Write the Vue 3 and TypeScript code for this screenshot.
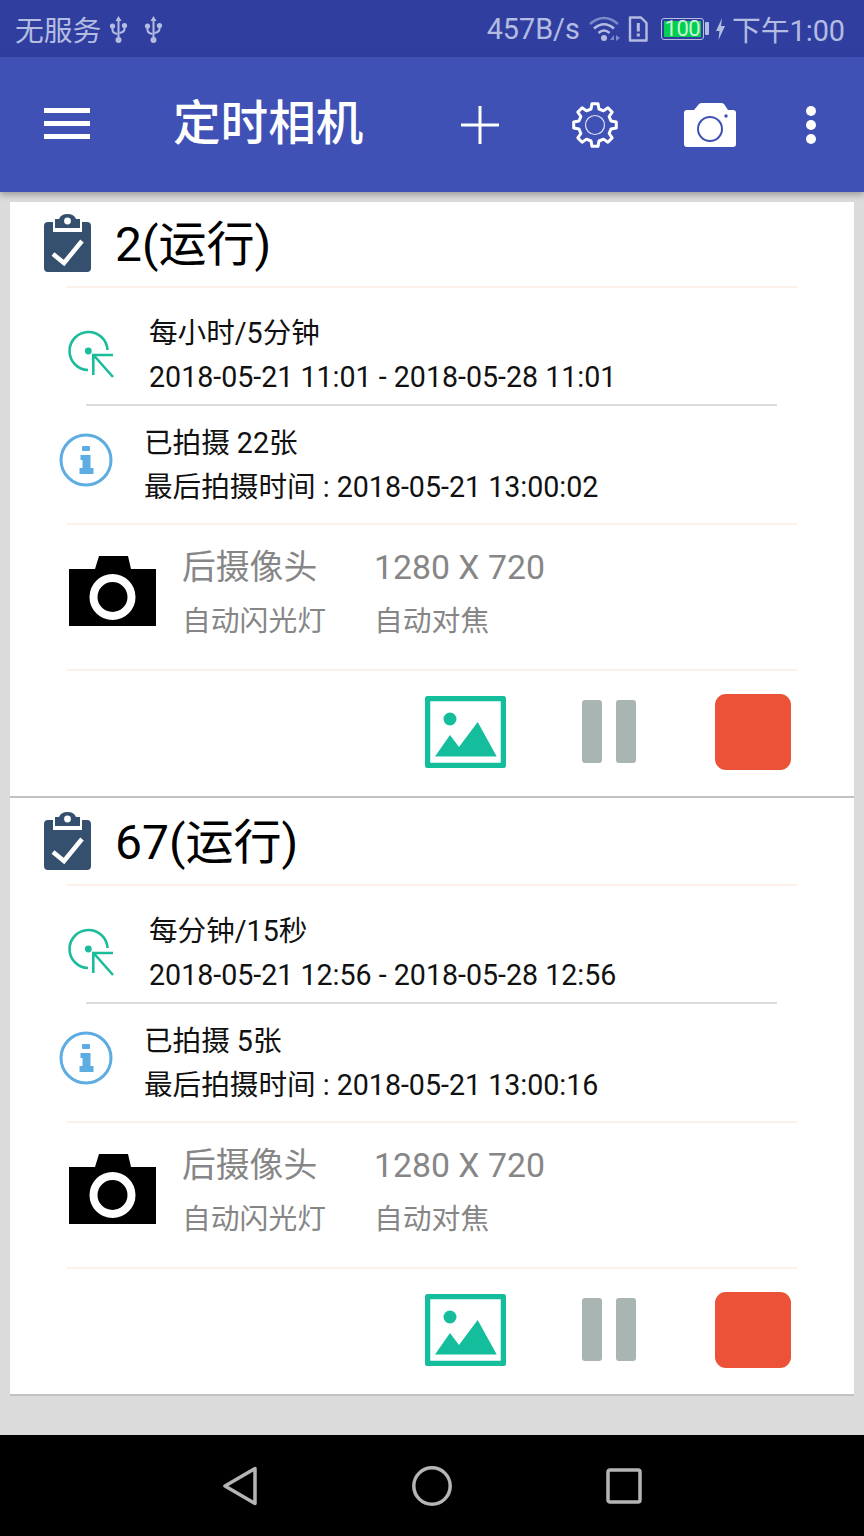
<template>
  <div class="screen">
    <div class="status-bar">
      <span class="carrier">无服务</span>
      <svg v-for="n in 2" :key="n" class="usb" viewBox="0 0 18 28">
        <path d="M9 1 L12 6 H10 V26 H8 V6 H6 Z" fill="#b4bce2" />
        <circle cx="9" cy="25" r="3" fill="#b4bce2" />
        <path d="M3 12 V15 Q3 18 8 19 M15 11 V14 Q15 17 10 18" fill="none" stroke="#b4bce2" stroke-width="2" />
        <circle cx="3" cy="11" r="2.6" fill="#b4bce2" />
        <circle cx="15" cy="10.5" r="2.6" fill="#b4bce2" />
      </svg>
      <span class="status-spacer"></span>
      <span class="speed">457B/s</span>
      <svg class="wifi" viewBox="0 0 32 26">
        <path d="M1 8 Q15 -4 29 8" fill="none" stroke="#7f8aca" stroke-width="2.4" />
        <path d="M5 12.5 Q15 4 25 12.5" fill="none" stroke="#b4bce2" stroke-width="2.6" />
        <path d="M9.5 17 Q15 12 20.5 17" fill="none" stroke="#b4bce2" stroke-width="2.6" />
        <circle cx="15" cy="22" r="3" fill="#b4bce2" />
        <path d="M21 24 L25 19 V24 Z M27 19 L31 22 L27 25 Z" fill="#7f8aca" />
      </svg>
      <svg class="sim" viewBox="0 0 20 26">
        <path d="M2 1.5 H13 L18.5 7 V24.5 H2 Z" fill="none" stroke="#b4bce2" stroke-width="2.4" stroke-linejoin="round" />
        <rect x="8.8" y="7" width="3" height="8.5" fill="#b4bce2" />
        <rect x="8.8" y="17.5" width="3" height="3" fill="#b4bce2" />
      </svg>
      <div class="battery"><span class="battery-level">100</span></div>
      <span class="battery-tip"></span>
      <svg class="bolt" viewBox="0 0 9 22">
        <path d="M6 0 L0 13 H3.5 L2.5 22 L9 8 H5 Z" fill="#b4bce2" />
      </svg>
      <span class="clock">下午1:00</span>
    </div>

    <header class="toolbar">
      <div class="menu-slot">
        <div class="hamburger"><i></i><i></i><i></i></div>
      </div>
      <h1 class="title">定时相机</h1>
      <div class="tool">
        <svg width="38" height="38" viewBox="0 0 38 38">
          <path d="M0 19 H38 M19 0 V38" stroke="#fff" stroke-width="3" stroke-linecap="round" />
        </svg>
      </div>
      <div class="tool">
        <svg width="46" height="46" viewBox="0 0 46 46">
          <path :d="gearPath" fill="none" stroke="#fff" stroke-width="3" stroke-linejoin="round" />
          <circle cx="23" cy="23" r="9.5" fill="none" stroke="#dfe3f5" stroke-width="1.2" />
        </svg>
      </div>
      <div class="tool">
        <svg width="52" height="44" viewBox="0 0 52 44">
          <path d="M3 7 H10 L15 1 Q16 0 18 0 H37 Q39 0 40 1 L44 7 H49 Q52 7 52 10 V41 Q52 44 49 44 H3 Q0 44 0 41 V10 Q0 7 3 7 Z" fill="#fff" />
          <circle cx="26" cy="26" r="12" fill="#fff" stroke="#3f51b5" stroke-width="2" />
          <circle cx="42" cy="13" r="1.7" fill="#3f51b5" />
        </svg>
      </div>
      <div class="more"><i></i><i></i><i></i></div>
    </header>

    <main class="list">
      <section v-for="job in jobs" :key="job.name" class="card">
        <div class="card-title">
          <svg width="48" height="58" viewBox="0 0 48 58">
            <path d="M4 8 H9 V18 H38 V8 H43 Q47 8 47 12 V54 Q47 58 43 58 H4 Q0 58 0 54 V12 Q0 8 4 8 Z" fill="#35506f" />
            <path d="M11 5 H15 Q17 0 23.5 0 Q30 0 32 5 H36 V14 H11 Z" fill="#35506f" />
            <circle cx="23.5" cy="7" r="3.4" fill="#fff" />
            <path d="M9 40 L20 49 L38 27" fill="none" stroke="#fff" stroke-width="4.5" />
          </svg>
          <span class="job-name">{{ job.name }}(运行)</span>
        </div>
        <div class="rule"></div>

        <div class="schedule">
          <svg class="clock-icon" width="48" height="48" viewBox="0 0 48 48">
            <path d="M39.5 20 A19 19 0 1 0 20 40" fill="none" stroke="#1abc9c" stroke-width="2.6" />
            <circle cx="20.3" cy="21" r="3.4" fill="#1abc9c" />
            <path d="M25.3 45 V25 H45 M25.5 25 L45 47" fill="none" stroke="#1abc9c" stroke-width="2.6" />
          </svg>
          <div class="lines">
            <div>{{ job.interval }}</div>
            <div>{{ job.period }}</div>
          </div>
        </div>
        <div class="rule-short"></div>

        <div class="info">
          <svg width="54" height="54" viewBox="0 0 54 54">
            <circle cx="27" cy="27" r="25" fill="none" stroke="#5dade2" stroke-width="3" />
            <rect x="23" y="13" width="8" height="5" rx="1" fill="#5dade2" />
            <path d="M21.5 22 H31.5 V35 H34.5 V41 H20.5 V35 H23.5 V27 H21.5 Z" fill="#5dade2" />
          </svg>
          <div class="lines">
            <div>已拍摄 {{ job.count }}张</div>
            <div>最后拍摄时间 : {{ job.last }}</div>
          </div>
        </div>
        <div class="rule"></div>

        <div class="camera">
          <svg class="camera-icon" width="87" height="70" viewBox="0 0 87 70">
            <path d="M0 13 H26 L30 0 H59 L62 13 H87 V70 H0 Z" fill="#000" />
            <circle cx="43.5" cy="41" r="19" fill="#000" stroke="#fff" stroke-width="8" />
          </svg>
          <div class="cam-col first">
            <div class="cam-main">后摄像头</div>
            <div class="cam-sub">自动闪光灯</div>
          </div>
          <div class="cam-col">
            <div class="cam-main">1280 X 720</div>
            <div class="cam-sub">自动对焦</div>
          </div>
        </div>
        <div class="rule"></div>

        <div class="actions">
          <svg class="gallery" width="81" height="72" viewBox="0 0 81 72">
            <rect x="2.5" y="2.5" width="76" height="67" rx="1" fill="none" stroke="#14bd9c" stroke-width="5.5" />
            <circle cx="25" cy="23" r="6.5" fill="#14bd9c" />
            <path d="M10 60.5 L25 39 L34 51 L52.7 26 L71.7 60.5 Z" fill="#14bd9c" />
          </svg>
          <div class="pause"><i></i><i></i></div>
          <div class="stop"></div>
        </div>
      </section>
    </main>

    <nav class="nav-bar">
      <svg width="36" height="40" viewBox="0 0 36 40">
        <path d="M3 20 L33 2.5 V37.5 Z" fill="none" stroke="#b5b5b5" stroke-width="3.5" stroke-linejoin="round" />
      </svg>
      <svg width="40" height="40" viewBox="0 0 40 40">
        <circle cx="20" cy="20" r="18.2" fill="none" stroke="#b5b5b5" stroke-width="3.5" />
      </svg>
      <svg width="36" height="36" viewBox="0 0 36 36">
        <rect x="2" y="2" width="32" height="32" rx="2" fill="none" stroke="#b5b5b5" stroke-width="3.5" />
      </svg>
    </nav>
  </div>
</template>

<script setup lang="ts">
interface Job {
  name: string;
  interval: string;
  period: string;
  count: number;
  last: string;
}

const jobs: Job[] = [
  {
    name: '2',
    interval: '每小时/5分钟',
    period: '2018-05-21 11:01 - 2018-05-28 11:01',
    count: 22,
    last: '2018-05-21 13:00:02',
  },
  {
    name: '67',
    interval: '每分钟/15秒',
    period: '2018-05-21 12:56 - 2018-05-28 12:56',
    count: 5,
    last: '2018-05-21 13:00:16',
  },
];

// 8-tooth gear outline, around the 46x46 box centre
const buildGear = (): string => {
  const pts: string[] = [];
  const teeth = 8;
  for (let i = 0; i < teeth; i++) {
    const a = (i * Math.PI * 2) / teeth;
    const step = Math.PI / teeth;
    const corners: [number, number][] = [
      [16.5, a - step * 0.62],
      [21.5, a - step * 0.36],
      [21.5, a + step * 0.36],
      [16.5, a + step * 0.62],
    ];
    for (const [r, t] of corners) {
      pts.push(`${(23 + r * Math.sin(t)).toFixed(2)} ${(23 - r * Math.cos(t)).toFixed(2)}`);
    }
  }
  return `M${pts.join(' L')} Z`;
};

const gearPath = buildGear();
</script>

<style scoped>
.screen {
  width: 864px;
  height: 1536px;
  display: flex;
  flex-direction: column;
  background: #dbdbdb;
  font-family: Roboto, 'Noto Sans CJK SC', sans-serif;
  overflow: hidden;
}

.status-bar {
  height: 57px;
  flex: none;
  display: flex;
  align-items: center;
  padding: 0 19px 0 15px;
  background: #303f9f;
  color: #b4bce2;
  font-size: 28.8px;
}
.carrier {
  margin-right: 8px;
}
.usb {
  width: 19px;
  height: 28px;
  margin-right: 16px;
}
.status-spacer {
  flex: 1;
}
.speed {
  margin-right: 9px;
}
.wifi {
  width: 32px;
  height: 26px;
  margin-right: 7px;
}
.sim {
  width: 20px;
  height: 26px;
  margin-right: 13px;
}
.battery {
  width: 43px;
  height: 22px;
  box-sizing: border-box;
  border: 1px solid #b4bce2;
  border-radius: 3px;
  padding: 2px;
  display: flex;
}
.battery-level {
  flex: 1;
  background: #00cf4f;
  color: #c8f5d5;
  font-size: 22px;
  line-height: 16px;
  text-align: center;
  letter-spacing: -0.5px;
}
.battery-tip {
  width: 4px;
  height: 13px;
  margin-left: 1px;
  background: #b4bce2;
  border-radius: 1px;
}
.bolt {
  width: 9px;
  height: 22px;
  margin: 0 7px 0 7px;
}

.toolbar {
  height: 135px;
  flex: none;
  display: flex;
  align-items: center;
  background: #3f51b5;
  box-shadow: 0 3px 6px rgba(0, 0, 0, 0.28);
  position: relative;
}
.menu-slot {
  width: 134px;
  display: flex;
  justify-content: center;
}
.hamburger {
  width: 46px;
  display: flex;
  flex-direction: column;
  gap: 8px;
  margin-top: -2px;
}
.hamburger i {
  height: 5px;
  background: #fff;
}
.title {
  width: 249px;
  margin: 0 0 0 39px;
  color: #fff;
  font-size: 47.6px;
  font-weight: 500;
  line-height: 1;
}
.tool {
  width: 115px;
  display: flex;
  justify-content: center;
}
.tool svg {
  display: block;
}
.more {
  width: 88px;
  display: flex;
  flex-direction: column;
  align-items: center;
  gap: 4px;
}
.more i {
  width: 10px;
  height: 10px;
  border-radius: 50%;
  background: #fff;
}

.list {
  flex: 1;
  padding: 10px 10px 0;
}
.card {
  height: 596px;
  box-sizing: border-box;
  background: #fff;
  border-bottom: 2px solid #c2c2c2;
  display: flex;
  flex-direction: column;
}
.card + .card {
  height: 598px;
  padding-top: 2px;
}
.card-title {
  height: 84px;
  flex: none;
  box-sizing: border-box;
  padding: 12px 0 0 34px;
  display: flex;
  align-items: flex-start;
}
.job-name {
  margin-left: 23px;
  font-size: 48px;
  line-height: 62px;
  color: #000;
}
.rule {
  height: 2px;
  flex: none;
  margin: 0 57px;
  background: #fdf0e8;
}
.rule-short {
  height: 2px;
  flex: none;
  margin: 0 77px 0 76px;
  background: #dcdcdc;
}
.schedule,
.info {
  height: 116px;
  flex: none;
  box-sizing: border-box;
  display: flex;
  align-items: flex-start;
  color: #111;
}
.schedule {
  padding: 23px 0 0 58px;
}
.clock-icon {
  margin: 19px 0 0;
  flex: none;
}
.schedule .lines {
  margin-left: 33px;
}
.info {
  height: 117px;
  padding: 15px 0 0 49px;
}
.info svg {
  margin-top: 12px;
  flex: none;
}
.info .lines {
  margin-left: 31px;
}
.lines {
  font-size: 28.6px;
  line-height: 44px;
  white-space: nowrap;
}

.camera {
  height: 144px;
  flex: none;
  box-sizing: border-box;
  padding: 29px 0 0 59px;
  display: flex;
  align-items: flex-start;
}
.camera-icon {
  margin-top: 2px;
  flex: none;
}
.cam-col {
  color: #868686;
}
.cam-col.first {
  width: 192px;
  margin-left: 26px;
}
.cam-main {
  font-size: 33.8px;
  line-height: 28px;
  white-space: nowrap;
}
.cam-sub {
  margin: 25px 0 0;
  font-size: 28.8px;
  line-height: 28px;
  white-space: nowrap;
}

.actions {
  flex: 1;
  display: flex;
  align-items: flex-start;
  padding: 24px 0 0 415px;
}
.gallery {
  flex: none;
  margin-top: 1px;
}
.pause {
  display: flex;
  gap: 14px;
  margin: 5px 0 0 76px;
}
.pause i {
  width: 20px;
  height: 63px;
  border-radius: 3px;
  background: #a9b5b3;
}
.stop {
  width: 76px;
  height: 76px;
  margin: -1px 0 0 79px;
  border-radius: 11px;
  background: #ec5237;
}

.nav-bar {
  height: 101px;
  flex: none;
  display: flex;
  align-items: center;
  justify-content: space-between;
  padding: 0 222px;
  background: #000;
}
</style>

<style>
html,
body {
  margin: 0;
  background: #dbdbdb;
}
</style>
